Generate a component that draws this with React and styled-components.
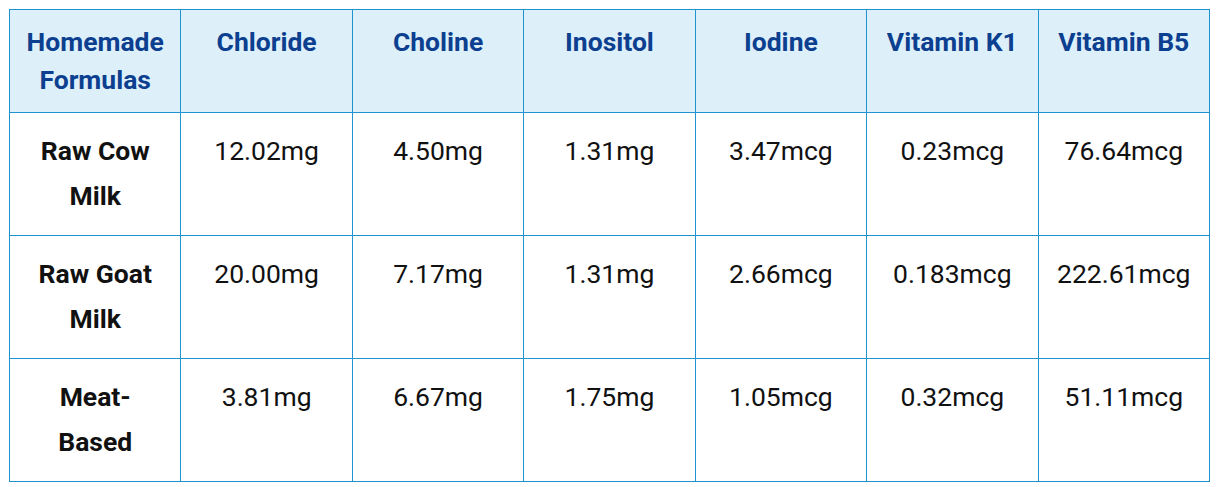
import styled, { createGlobalStyle } from "styled-components";

const Global = createGlobalStyle`
	body {
		margin: 0;
		background: #ffffff;
		font-family: Roboto, "Liberation Sans", sans-serif;
	}
`;

const Page = styled.div`
	padding: 9px 0 0 9px;
`;

const Table = styled.table`
	width: 1201px;
	border-collapse: collapse;
	table-layout: fixed;
	border: 1px solid #1f92d0;
`;

const Head = styled.th`
	background-color: #ddf0fa;
	color: #0c3f8f;
	font-size: 26.5px;
	font-weight: 700;
	line-height: 38px;
	text-align: center;
	vertical-align: top;
	padding: 13px 8px 13px;
	border: 1px solid #1f92d0;
`;

const Cell = styled.td`
	color: #111111;
	font-size: 26.5px;
	font-weight: ${props => (props.$bold ? 700 : 400)};
	line-height: 45px;
	text-align: center;
	vertical-align: top;
	padding: 15px ${props => (props.$bold ? "24px" : "4px")} 17px;
	height: 90px;
	border: 1px solid #1f92d0;
`;

const columns = ["Homemade Formulas", "Chloride", "Choline", "Inositol", "Iodine", "Vitamin K1", "Vitamin B5"];

const rows = [
	{ name: "Raw Cow Milk", values: ["12.02mg", "4.50mg", "1.31mg", "3.47mcg", "0.23mcg", "76.64mcg"] },
	{ name: "Raw Goat Milk", values: ["20.00mg", "7.17mg", "1.31mg", "2.66mcg", "0.183mcg", "222.61mcg"] },
	{ name: "Meat-Based", values: ["3.81mg", "6.67mg", "1.75mg", "1.05mcg", "0.32mcg", "51.11mcg"] },
];

const App = () => {
	return (
		<Page>
			<Global />
			<Table>
				<thead>
					<tr>
						{columns.map(col => <Head key={col}>{col}</Head>)}
					</tr>
				</thead>
				<tbody>
					{rows.map(row => (
						<tr key={row.name}>
							<Cell $bold>{row.name}</Cell>
							{row.values.map((v, i) => <Cell key={i}>{v}</Cell>)}
						</tr>
					))}
				</tbody>
			</Table>
		</Page>
	);
};

export default App;
